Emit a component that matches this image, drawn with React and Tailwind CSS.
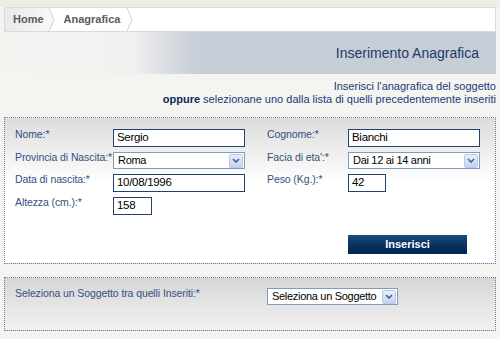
const labelCls = "whitespace-nowrap text-[10.5px] leading-[14px] tracking-[-0.1px] text-[#34507f] -mt-[2px]";

function TextBox({ value, width }) {
  return (
    <div
      className={`flex h-[18px] items-center border border-[#23416b] bg-white pl-[3px] text-[11.5px] tracking-[-0.3px] text-black ${width}`}
    >
      {value}
    </div>
  );
}

function SelectBox({ value, width }) {
  return (
    <div
      className={`flex h-[17px] items-center justify-between border border-[#7f9db9] bg-white pl-[4px] pr-[1px] ${width}`}
    >
      <span className="whitespace-nowrap text-[11px] tracking-[-0.3px] text-black">{value}</span>
      <span className="flex h-[14px] w-[14px] shrink-0 items-center justify-center rounded-[2px] border border-[#b7c8ea] bg-[linear-gradient(to_bottom,#e8effc,#c3d3f0)]">
        <svg width="8" height="5" viewBox="0 0 8 5">
          <path d="M1 1L4 4L7 1" fill="none" stroke="#4a5f86" strokeWidth="1.6" />
        </svg>
      </span>
    </div>
  );
}

function App() {
  return (
    <div className="h-[339px] w-[500px] overflow-hidden bg-[#f4f4f0] font-['Liberation_Sans',Arial,sans-serif]">
      <div className="h-[7px] bg-[#efece3]" />

      {/* breadcrumb */}
      <div className="mx-[4px] flex h-[25px] items-stretch border border-[#dcdad2] bg-white">
        <div className="flex items-center bg-[linear-gradient(to_right,#e9e9e9,#f6f6f6)] pl-[8px] pr-[4px]">
          <span className="text-[11px] font-bold text-[#5b5b5b]">Home</span>
        </div>
        <svg width="7" height="23" viewBox="0 0 7 23" className="shrink-0">
          <polygon points="0,0 1,0 6,11.5 1,23 0,23" fill="#f6f6f6" />
          <polyline points="1,0 6,11.5 1,23" fill="none" stroke="#d2d2d2" strokeWidth="1" />
        </svg>
        <div className="flex items-center pl-[9px] pr-[6px]">
          <span className="text-[11px] font-bold text-[#5b5b5b]">Anagrafica</span>
        </div>
        <svg width="7" height="23" viewBox="0 0 7 23" className="shrink-0">
          <polyline points="1,0 6,11.5 1,23" fill="none" stroke="#d2d2d2" strokeWidth="1" />
        </svg>
      </div>

      {/* banner */}
      <div className="mx-[4px] flex h-[42px] items-center justify-end bg-[linear-gradient(to_right,#f3f3f1_0%,#f1f1f0_26%,#c8ced8_39%,#c7cdd7_100%)] pr-[17px]">
        <span className="text-[14px] text-[#1d3a68]">Inserimento Anagrafica</span>
      </div>

      {/* intro */}
      <div className="mx-[4px] mt-[6px] text-right text-[11px] leading-[13px] text-[#1b3a7a]">
        <p>Inserisci l'anagrafica del soggetto</p>
        <p>
          <b className="text-[#0c2a5a]">oppure</b> selezionane uno dalla lista di quelli precedentemente inseriti
        </p>
      </div>

      {/* form */}
      <div className="mx-[4px] mt-[11px] h-[147px] border border-dotted border-[#6d83a3] bg-[linear-gradient(to_bottom,#dcdcdc,#ffffff_45%)] pl-[10px] pt-[11px]">
        <div className="flex h-[23px] items-start">
          <div className={`w-[98px] ${labelCls}`}>Nome:*</div>
          <TextBox value="Sergio" width="w-[132px]" />
          <div className={`ml-[22px] w-[81px] ${labelCls}`}>Cognome:*</div>
          <TextBox value="Bianchi" width="w-[132px]" />
        </div>
        <div className="flex h-[22px] items-start">
          <div className={`w-[98px] ${labelCls}`}>Provincia di Nascita:*</div>
          <SelectBox value="Roma" width="w-[132px]" />
          <div className={`ml-[22px] w-[81px] ${labelCls}`}>Facia di eta':*</div>
          <SelectBox value="Dai 12 ai 14 anni" width="w-[132px]" />
        </div>
        <div className="flex h-[23px] items-start">
          <div className={`w-[98px] ${labelCls}`}>Data di nascita:*</div>
          <TextBox value="10/08/1996" width="w-[132px]" />
          <div className={`ml-[22px] w-[81px] ${labelCls}`}>Peso (Kg.):*</div>
          <TextBox value="42" width="w-[38px]" />
        </div>
        <div className="flex h-[38px] items-start">
          <div className={`w-[98px] ${labelCls}`}>Altezza (cm.):*</div>
          <TextBox value="158" width="w-[39px]" />
        </div>
        <button className="ml-[333px] flex h-[19px] w-[119px] items-center justify-center bg-[linear-gradient(to_bottom,#1c4c82,#06305f_55%,#002755)] text-[11px] font-bold text-white">
          Inserisci
        </button>
      </div>

      {/* choose existing */}
      <div className="mx-[4px] mt-[13px] flex h-[54px] items-start border border-dotted border-[#6d83a3] bg-[linear-gradient(to_bottom,#d6d6d6,#f2f2f2)] pl-[10px] pt-[10px]">
        <div className={`w-[252px] ${labelCls}`}>Seleziona un Soggetto tra quelli Inseriti:*</div>
        <SelectBox value="Seleziona un Soggetto" width="w-[131px]" />
      </div>
    </div>
  );
}

export default App;
